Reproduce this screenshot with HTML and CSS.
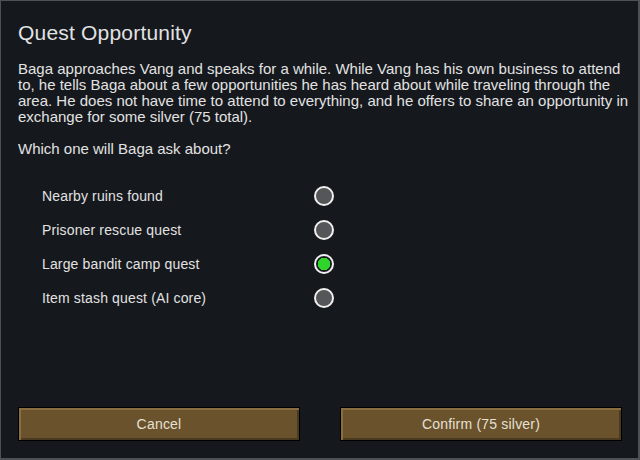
FILE: index.html
```html
<!DOCTYPE html>
<html lang="en">
  <head>
    <meta charset="UTF-8" />
    <title>Quest Opportunity</title>
    <link rel="stylesheet" href="styles.css">
  </head>
  <body>
    <div class="dialog">
      <h1 class="title">Quest Opportunity</h1>
      <p class="text">Baga approaches Vang and speaks for a while. While Vang has his own business to attend<br>
        to, he tells Baga about a few opportunities he has heard about while traveling through the<br>
        area. He does not have time to attend to everything, and he offers to share an opportunity in<br>
        exchange for some silver (75 total).</p>
      <p class="text">Which one will Baga ask about?</p>

      <div class="options">
        <div class="option"><span class="label">Nearby ruins found</span><span class="radio"></span></div>
        <div class="option"><span class="label">Prisoner rescue quest</span><span class="radio"></span></div>
        <div class="option"><span class="label">Large bandit camp quest</span><span class="radio checked"></span></div>
        <div class="option"><span class="label">Item stash quest (AI core)</span><span class="radio"></span></div>
      </div>

      <div class="buttons">
        <button class="btn">Cancel</button>
        <button class="btn">Confirm (75 silver)</button>
      </div>
    </div>
  </body>
</html>
```

FILE: styles.css
```css
html, body {
  margin: 0;
  background: #15181d;
}

.dialog {
  width: 640px;
  height: 460px;
  box-sizing: border-box;
  border-style: solid;
  border-color: #4d5055;
  border-width: 1px 2px 2px 1px;
  padding: 20px 16px 17px 17px;
  display: flex;
  flex-direction: column;
  background: #15181d;
  color: #e2e2e2;
  font-family: "Liberation Sans", Arial, sans-serif;
}

.title {
  margin: 0;
  font-size: 21px;
  line-height: 24px;
  font-weight: normal;
  letter-spacing: 0.2px;
}

.text {
  margin: 16px 0 0 0;
  font-size: 15px;
  line-height: 16px;
  white-space: nowrap;
}

.options {
  margin-top: 22px;
  padding-left: 24px;
}

.option {
  display: flex;
  align-items: center;
  height: 34px;
  font-size: 14px;
  letter-spacing: 0.15px;
}

.label {
  width: 272px;
}

.radio {
  width: 20px;
  height: 20px;
  box-sizing: border-box;
  border: 2px solid #f0f0f0;
  border-radius: 50%;
  background: #555657;
}

.radio.checked {
  background: radial-gradient(circle, #2fd52a 0 6px, #1c1f22 6.5px);
}

.buttons {
  margin-top: auto;
  display: flex;
  justify-content: space-between;
}

.btn {
  width: 282px;
  height: 34px;
  margin: 0;
  padding: 0;
  border: 1px solid #000;
  background: #6a522d;
  box-shadow: inset 2px 2px 0 #8a6d40, inset -2px -2px 0 #4a3a20;
  color: #e6e0d2;
  font-family: "Liberation Sans", Arial, sans-serif;
  font-size: 14px;
  letter-spacing: 0.2px;
}
```
